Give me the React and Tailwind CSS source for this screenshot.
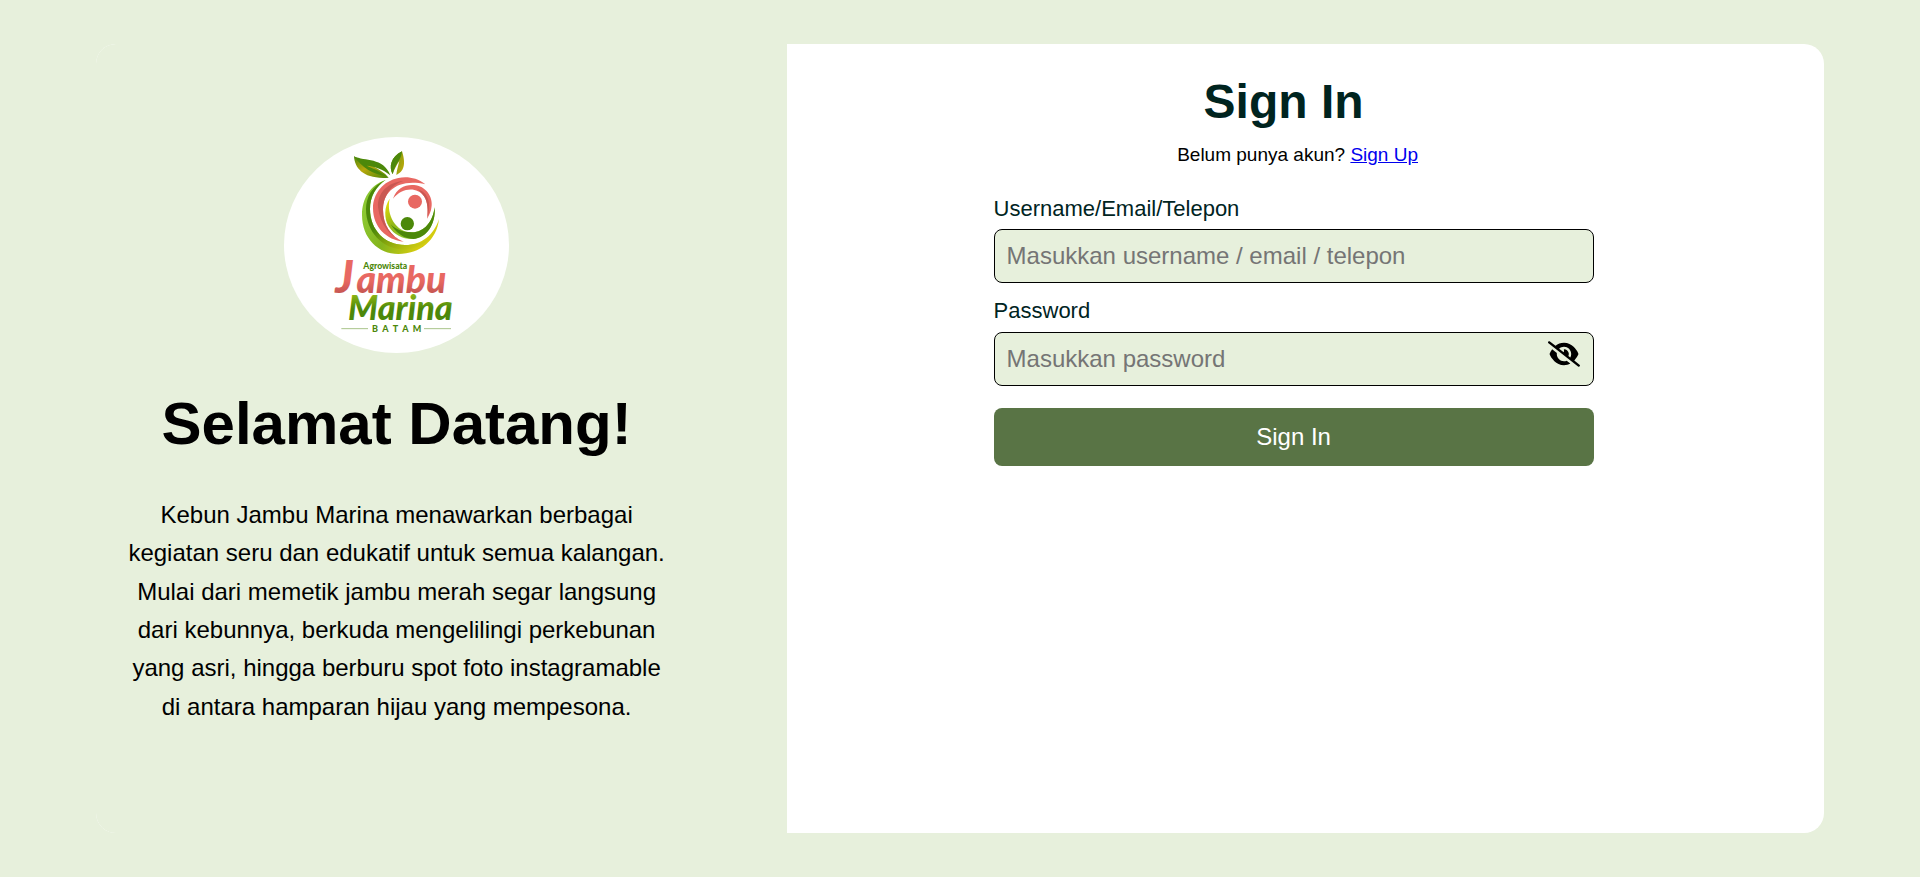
import { useState } from "react";
import { FaEye, FaEyeSlash } from "react-icons/fa6";

function Logo() {
  return (
    <svg viewBox="42 36 675 648" className="h-[216px] w-[225px] rounded-[50%] bg-white" role="img" aria-label="Agrowisata Jambu Marina Batam">
      <defs>
        <linearGradient id="gold" x1="0" y1="0" x2="1" y2="0.6">
          <stop offset="0" stopColor="#5c9410" />
          <stop offset="1" stopColor="#b8a80c" />
        </linearGradient>
        <linearGradient id="goldLeft" x1="0" y1="0" x2="1" y2="1">
          <stop offset="0" stopColor="#4c880a" />
          <stop offset="0.45" stopColor="#b8a80c" />
          <stop offset="1" stopColor="#4c880a" />
        </linearGradient>
        <linearGradient id="rim" gradientUnits="userSpaceOnUse" x1="290" y1="250" x2="490" y2="350">
          <stop offset="0" stopColor="#8cc832" />
          <stop offset="0.4" stopColor="#84b41c" />
          <stop offset="0.85" stopColor="#d4cc10" />
        </linearGradient>
        <linearGradient id="rimDark" gradientUnits="userSpaceOnUse" x1="300" y1="200" x2="430" y2="372">
          <stop offset="0" stopColor="#4c880a" />
          <stop offset="0.45" stopColor="#4c880a" />
          <stop offset="1" stopColor="#c8c812" />
        </linearGradient>
        <linearGradient id="bowl" gradientUnits="userSpaceOnUse" x1="345" y1="240" x2="420" y2="330">
          <stop offset="0" stopColor="#e0d808" />
          <stop offset="0.5" stopColor="#94b818" />
          <stop offset="1" stopColor="#8cc832" />
        </linearGradient>
        <linearGradient id="red" gradientUnits="userSpaceOnUse" x1="0" y1="410" x2="0" y2="525">
          <stop offset="0.5" stopColor="#e86862" />
          <stop offset="0.85" stopColor="#c25450" />
        </linearGradient>
        <linearGradient id="green" gradientUnits="userSpaceOnUse" x1="0" y1="510" x2="0" y2="585">
          <stop offset="0" stopColor="#8cb414" />
          <stop offset="0.55" stopColor="#4c880a" />
        </linearGradient>
      </defs>

      {/* leaves */}
      <path d="M252 94C254 132 284 164 356 158C330 128 290 118 252 94Z" fill="url(#goldLeft)" />
      <path d="M252 94C284 110 340 96 361 151C338 132 314 124 290 122C310 130 332 140 348 154C308 148 276 128 252 94Z" fill="#4c880a" />
      <path d="M396 79C362 96 356 126 368 148C372 134 380 120 388 108C384 124 380 138 379 150C408 138 405 106 396 79Z" fill="url(#gold)" />
      <path d="M396 79C362 96 356 126 368 148C371 132 378 118 386 108C392 98 395 90 396 79Z" fill="#4c880a" />

      {/* fruit */}
      <path d="M347 165C300 180 276 222 276 270C276 340 325 387 385 387C450 387 500 346 507 282C492 330 455 360 405 360C345 360 300 315 300 252C300 215 318 184 347 165Z" fill="url(#rim)" />
      <path d="M347 165C306 182 288 218 288 252C288 320 338 376 410 374C440 371 462 358 476 342C456 354 430 360 405 360C345 360 300 315 300 252C300 215 318 184 347 165Z" fill="url(#rimDark)" />
      <path d="M466 178C440 158 412 154 385 159C340 168 309 205 309 250C309 306 350 346 401 350C362 334 339 300 339 254C339 198 386 160 466 178Z" fill="#e86862" />
      <path d="M400 168C352 172 322 205 324 246C330 300 362 336 401 350C362 334 339 300 339 254C339 214 362 180 400 168Z" fill="#c95852" />
      <path d="M369 221C380 188 410 176 438 181C472 187 493 222 483 255C480 266 475 274 472 281C474 255 474 232 462 214C440 184 396 188 369 221Z" fill="#e86862" />
      <path d="M442 193C476 202 485 236 472 281C474 255 474 232 462 214C457 206 450 198 442 193Z" fill="#c95852" />
      <path d="M359 221C342 246 342 280 356 304C372 330 398 342 424 342C468 342 498 298 494 247C488 290 464 322 426 322C378 322 348 270 359 221Z" fill="url(#bowl)" />
      <path d="M362 298C378 322 400 342 430 342C470 340 498 298 494 247C488 290 464 322 426 322C396 322 376 312 362 298Z" fill="#4c880a" />
      <circle cx="435" cy="230" r="21" fill="#e86862" />
      <circle cx="412" cy="296" r="20" fill="#4c880a" />

      {/* wordmark */}
      <g fontFamily="Lato, sans-serif" fontStyle="italic" fontWeight="900">
        <text x="196" y="504" fontSize="134" fill="url(#red)">
          J<tspan dx="8" fontSize="112">ambu</tspan>
        </text>
        <text x="234" y="584" fontSize="102" fill="url(#green)">Marina</text>
      </g>
      <g fontFamily="Lato, sans-serif" fontWeight="900" fill="#4c880a">
        <text x="280" y="432" fontSize="26">Agrowisata</text>
        <text x="306" y="621" fontSize="27">B</text>
        <text x="337" y="621" fontSize="27">A</text>
        <text x="368" y="621" fontSize="27">T</text>
        <text x="397" y="621" fontSize="27">A</text>
        <text x="428" y="621" fontSize="27">M</text>
      </g>
      <path d="M214 611H294M462 611H543" stroke="#a9c48a" strokeWidth="3" />
    </svg>
  );
}

const field =
  "block h-[54px] w-full rounded-lg border border-black bg-[#e7f0dc] px-3 text-2xl text-black placeholder:text-[#757575]";
const label = "mb-2 block text-[22px] leading-6 text-[#00241f]";

export default function App() {
  const [visible, setVisible] = useState(false);

  return (
    <div className="flex min-h-screen items-center justify-center bg-[#e7f0dc] font-['Liberation_Sans',Arial,sans-serif] text-black">
      <main className="flex min-h-[90vh] w-[90%] overflow-hidden rounded-[20px] bg-white">
        <section className="flex w-2/5 flex-col items-center bg-[#e7f0dc] pt-[93px] pr-[90px] text-center">
          <Logo />
          <h1 className="mt-[35px] text-6xl leading-[72px] font-bold">Selamat Datang!</h1>
          <p className="mt-9 max-w-[550px] text-2xl leading-[1.6]">
            Kebun Jambu Marina menawarkan berbagai kegiatan seru dan edukatif untuk semua kalangan. Mulai dari memetik
            jambu merah segar langsung dari kebunnya, berkuda mengelilingi perkebunan yang asri, hingga berburu spot
            foto instagramable di antara hamparan hijau yang mempesona.
          </p>
        </section>

        <section className="w-3/5 pt-[34px] pr-6">
          <div className="mx-auto max-w-[600px]">
            <h2 className="pr-5 text-center text-5xl leading-[48px] font-bold text-[#00241f]">Sign In</h2>
            <p className="mt-[17px] pl-2 text-center text-[19px] leading-6">
              Belum punya akun?{" "}
              <a href="#signup" className="text-[#0000ee] underline">
                Sign Up
              </a>
            </p>
            <form className="mt-[30px]" onSubmit={(e) => e.preventDefault()}>
              <label htmlFor="username" className={label}>
                Username/Email/Telepon
              </label>
              <input id="username" type="text" placeholder="Masukkan username / email / telepon" className={field} />
              <label htmlFor="password" className={`mt-4 ${label}`}>
                Password
              </label>
              <div className="relative pt-px">
                <input
                  id="password"
                  type={visible ? "text" : "password"}
                  placeholder="Masukkan password"
                  className={field}
                />
                <button
                  type="button"
                  aria-label="Tampilkan password"
                  onClick={() => setVisible(!visible)}
                  className="absolute top-2.5 right-3.5"
                >
                  {visible ? <FaEye className="h-[26px] w-8" /> : <FaEyeSlash className="h-[26px] w-8" />}
                </button>
              </div>
              <button type="submit" className="mt-[22px] h-[58px] w-full rounded-lg bg-[#597445] text-2xl text-white">
                Sign In
              </button>
            </form>
          </div>
        </section>
      </main>
    </div>
  );
}
